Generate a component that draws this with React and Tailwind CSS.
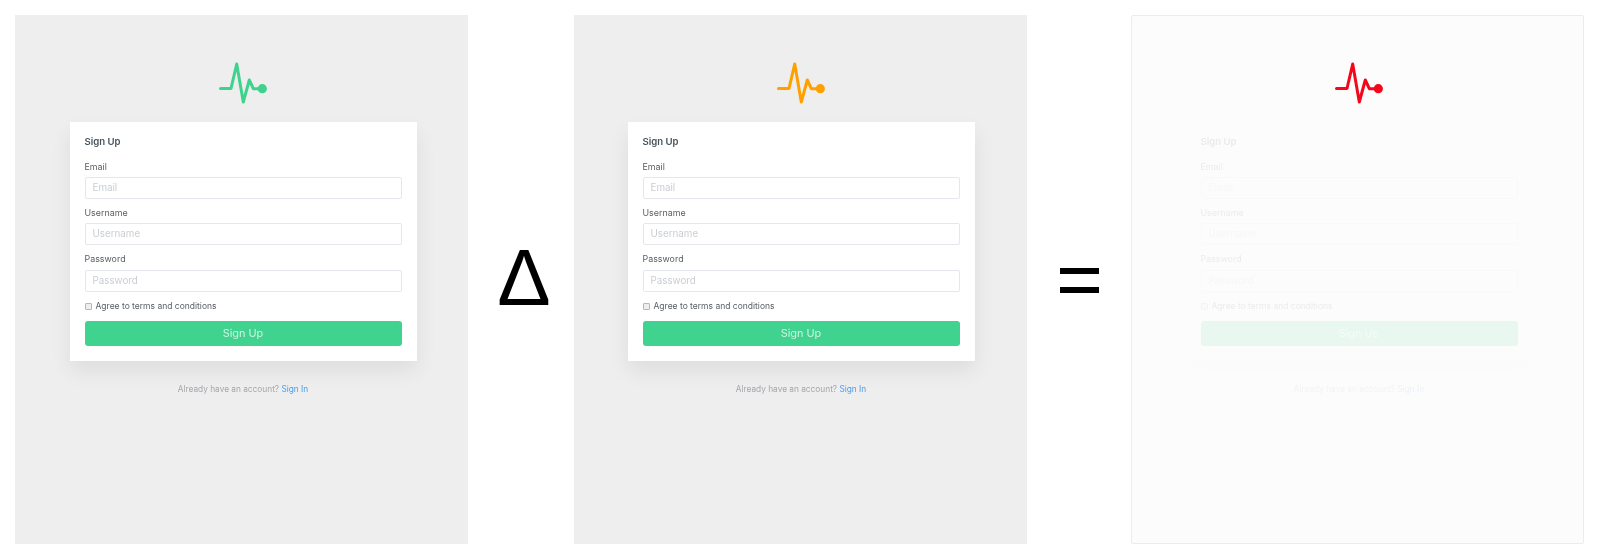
import React from "react";

function Logo({ color }) {
  return (
    <svg width="48" height="42" viewBox="0 0 48 42" fill="none" className="block">
      <path
        d="M1.5 26.5H12L17.7 2L24.3 40L30.3 18L34.3 26.7H43"
        stroke={color}
        strokeWidth="3"
        strokeLinecap="round"
        strokeLinejoin="round"
      />
      <circle cx="43.3" cy="26.7" r="4.6" fill={color} />
    </svg>
  );
}

function Field({ label, wrap, labelClass }) {
  return (
    <div className={wrap}>
      <div className={labelClass}>{label}</div>
      <div className="h-[22px] border border-[#e4e7ee] rounded-[2px] bg-white pl-[7px] flex items-center text-[9.8px] text-[#c9cdd3]">
        {label}
      </div>
    </div>
  );
}

function Card() {
  return (
    <>
      <div className="w-[347px] bg-white shadow-[0_10px_20px_rgba(0,0,0,0.07)] px-[15px] pt-[12px] pb-[15px]">
        <div className="text-[9.6px] leading-[15px] font-semibold text-[#44535c] mb-[10px]">Sign Up</div>
        <Field label="Email" wrap="mb-[6px]" labelClass="text-[8.9px] leading-[14px] pt-[1px] h-[14px] mb-[4px] text-[#5a6066]" />
        <Field label="Username" wrap="mb-[7px]" labelClass="text-[8.9px] leading-[14px] pt-[1px] h-[14px] mb-[4px] text-[#5a6066]" />
        <Field label="Password" wrap="mb-[8px]" labelClass="text-[8.9px] leading-[14px] h-[14px] mb-[4px] text-[#5a6066]" />
        <div className="flex items-center gap-[4px] mb-[9px] h-[12px]">
          <div className="w-[7px] h-[7px] border border-[#b4b8bc] rounded-[1px] bg-[#eeeeee]" />
          <span className="text-[8.5px] text-[#5a6066]">Agree to terms and conditions</span>
        </div>
        <div className="h-[25px] rounded-[3px] bg-[#3fd38f] flex items-center justify-center text-[10.9px] text-[#cdf3e1]">
          Sign Up
        </div>
      </div>
      <div className="mt-[21px] text-[8.3px] leading-[14px] text-[#a3a7ad]">
        Already have an account? <span className="text-[#4a9df0]">Sign In</span>
      </div>
    </>
  );
}

export default function App() {
  return (
    <div
      className="w-[1600px] h-[557px] bg-white flex items-start pt-[15px] pl-[15px] overflow-hidden blur-[0.35px]"
      style={{ fontFamily: "Inter, 'Noto Sans', sans-serif" }}
    >
      <div className="w-[453px] h-[529px] shrink-0 bg-[#eeeeee] flex flex-col items-center pl-[3px] pt-[47px]">
        <Logo color="#3dd38d" />
        <div className="mt-[18px] flex flex-col items-center">
          <Card />
        </div>
      </div>
      <div
        className="w-[106px] h-[529px] shrink-0 flex items-center justify-center pl-[6px] pb-[4px] text-black text-[80px] leading-none"
        style={{ fontFamily: "'Liberation Sans', sans-serif" }}
      >
        Δ
      </div>
      <div className="w-[453px] h-[529px] shrink-0 bg-[#eeeeee] flex flex-col items-center pl-[1px] pt-[47px]">
        <Logo color="#ffa000" />
        <div className="mt-[18px] flex flex-col items-center">
          <Card />
        </div>
      </div>
      <div className="w-[104px] h-[529px] shrink-0 flex flex-col items-center justify-center gap-[13px] pt-[2px]">
        <div className="w-[39px] h-[6px] bg-black" />
        <div className="w-[39px] h-[6px] bg-black" />
      </div>
      <div className="w-[453px] h-[529px] shrink-0 bg-[#fcfcfc] border border-[#ececec] rounded-[2px] flex flex-col items-center pl-[3px] pt-[46px]">
        <Logo color="#f5071b" />
        <div className="mt-[18px] flex flex-col items-center opacity-[0.1]">
          <Card />
        </div>
      </div>
    </div>
  );
}
